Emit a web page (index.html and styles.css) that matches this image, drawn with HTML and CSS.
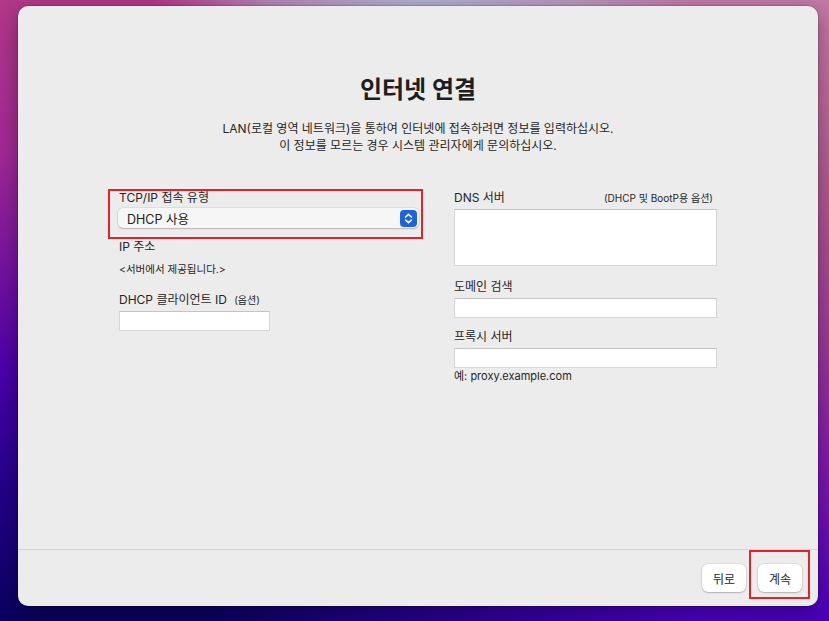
FILE: index.html
```html
<!DOCTYPE html>
<html lang="ko">
<head>
<meta charset="utf-8">
<title>인터넷 연결</title>
<link rel="stylesheet" href="styles.css">
</head>
<body>
<div class="window">
  <main class="content">
    <h1 class="title">인터넷 연결</h1>
    <p class="subtitle">LAN(로컬 영역 네트워크)을 통하여 인터넷에 접속하려면 정보를 입력하십시오.<br>이 정보를 모르는 경우 시스템 관리자에게 문의하십시오.</p>
    <div class="form">
      <div class="col col-left">
        <div class="group">
          <div class="label">TCP/IP 접속 유형</div>
          <div class="popup">
            <span class="popup-text">DHCP 사용</span>
            <span class="stepper">
              <svg width="17" height="17" viewBox="0 0 17 17"><rect x="0" y="0" width="17" height="17" rx="4" fill="#1b63e0"/><path d="M5.6 7 L8.5 4.3 L11.4 7" fill="none" stroke="#fff" stroke-width="1.6" stroke-linecap="round" stroke-linejoin="round"/><path d="M5.6 10 L8.5 12.7 L11.4 10" fill="none" stroke="#fff" stroke-width="1.6" stroke-linecap="round" stroke-linejoin="round"/></svg>
            </span>
          </div>
          <div class="annot annot-popup"></div>
        </div>
        <div class="label ip-label">IP 주소</div>
        <div class="static">&lt;서버에서 제공됩니다.&gt;</div>
        <div class="label client-label">DHCP 클라이언트 ID <span class="small">(옵션)</span></div>
        <div class="field client-field"></div>
      </div>
      <div class="col col-right">
        <div class="label row-label"><span>DNS 서버</span><span class="small">(DHCP 및 BootP용 옵션)</span></div>
        <div class="field area"></div>
        <div class="label gap-label">도메인 검색</div>
        <div class="field"></div>
        <div class="label gap-label2">프록시 서버</div>
        <div class="field"></div>
        <div class="hint">예: proxy.example.com</div>
      </div>
    </div>
  </main>
  <footer class="footer">
    <button class="btn">뒤로</button>
    <div class="btn-wrap">
      <button class="btn">계속</button>
      <div class="annot annot-btn"></div>
    </div>
  </footer>
</div>
</body>
</html>
```
FILE: styles.css
```css
html, body {
  margin: 0;
  padding: 0;
}
body {
  width: 829px;
  height: 621px;
  overflow: hidden;
  position: relative;
  font-family: "Inter", "Noto Sans CJK KR", sans-serif;
  color: #262626;
  background: linear-gradient(to bottom, #b23888 0%, #a02895 25%, #7010a0 45%, #4a00a8 60%, #24008a 78%, #0a0060 100%);
}
body::before {
  content: "";
  position: absolute;
  inset: 0;
  background: linear-gradient(to bottom, #c27aa6 0%, #b05a90 30%, #9a3a98 55%, #8018b0 75%, #4a00c0 100%);
  -webkit-mask-image: linear-gradient(to right, transparent 25%, #000 85%);
  mask-image: linear-gradient(to right, transparent 25%, #000 85%);
}
body::after {
  content: "";
  position: absolute;
  left: 150px;
  top: -30px;
  width: 550px;
  height: 60px;
  background: radial-gradient(ellipse at center, #b0b3cf 0%, rgba(176,179,207,0.6) 40%, rgba(176,179,207,0) 70%);
}
.window {
  position: relative;
  z-index: 1;
  margin: 6px 0 0 18px;
  width: 800px;
  height: 600px;
  box-sizing: border-box;
  border-radius: 10px;
  background: #ececec;
  box-shadow: 0 0 0 0.5px rgba(0,0,0,0.25), 0 6px 20px rgba(0,0,0,0.35);
  display: flex;
  flex-direction: column;
}
.content {
  flex: 1;
  display: flex;
  flex-direction: column;
  align-items: center;
  padding-top: 68px;
}
.title {
  margin: 0;
  font-size: 24px;
  line-height: 32px;
  font-weight: 700;
  color: #1e1e1e;
}
.subtitle {
  margin: 14px 0 0;
  font-size: 12px;
  line-height: 17px;
  text-align: center;
  color: #262626;
}
.form {
  margin-top: 36px;
  display: flex;
  gap: 35px;
  width: 598px;
}
.col {
  display: flex;
  flex-direction: column;
}
.col-left { width: 300px; }
.col-right { width: 263px; }
.label {
  font-size: 12px;
  line-height: 16px;
  color: #262626;
}
.small {
  font-size: 10px;
  margin-left: 4px;
}
.group {
  position: relative;
  display: flex;
  flex-direction: column;
}
.popup {
  margin: 2px 0 0 -1px;
  height: 20px;
  border-radius: 5px;
  background: #f6f6f6;
  box-shadow: 0 0 0 0.5px rgba(0,0,0,0.12), 0 1px 1.5px rgba(0,0,0,0.18);
  display: flex;
  align-items: center;
  justify-content: space-between;
  padding: 0 2px 0 9px;
}
.popup-text {
  font-size: 12.5px;
  color: #222;
}
.stepper {
  display: flex;
}
.annot {
  position: absolute;
  border: 2px solid #e8202a;
  pointer-events: none;
}
.annot-popup {
  left: -11px;
  top: -1px;
  right: -4px;
  bottom: -11px;
}
.ip-label { margin-top: 11px; }
.static {
  margin-top: 7px;
  font-size: 10.5px;
  line-height: 16px;
}
.client-label { margin-top: 14px; }
.field {
  margin-top: 3px;
  height: 20px;
  box-sizing: border-box;
  background: #fff;
  border: 1px solid #d6d6d6;
  border-top-color: #c4c4c4;
}
.client-field { width: 151px; }
.area { height: 57px; }
.row-label {
  display: flex;
  justify-content: space-between;
  align-items: center;
  padding-right: 4px;
}
.gap-label { margin-top: 13px; }
.gap-label2 { margin-top: 11px; }
.hint {
  margin-top: 1px;
  font-size: 11px;
  line-height: 14px;
}
.footer {
  height: 57px;
  box-sizing: border-box;
  border-top: 1px solid #d4d4d4;
  display: flex;
  justify-content: flex-end;
  align-items: flex-start;
  gap: 12px;
  padding: 14px 16px 0 0;
}
.btn-wrap {
  position: relative;
  display: flex;
}
.btn {
  width: 44px;
  height: 28px;
  border: none;
  border-radius: 6px;
  background: #fff;
  box-shadow: 0 0 0 0.5px rgba(0,0,0,0.12), 0 1px 1.5px rgba(0,0,0,0.2);
  font-family: "Inter", "Noto Sans CJK KR", sans-serif;
  font-size: 12px;
  color: #262626;
  padding: 0;
}
.annot-btn {
  left: -9px;
  right: -8px;
  top: -14px;
  bottom: -7px;
}
```
